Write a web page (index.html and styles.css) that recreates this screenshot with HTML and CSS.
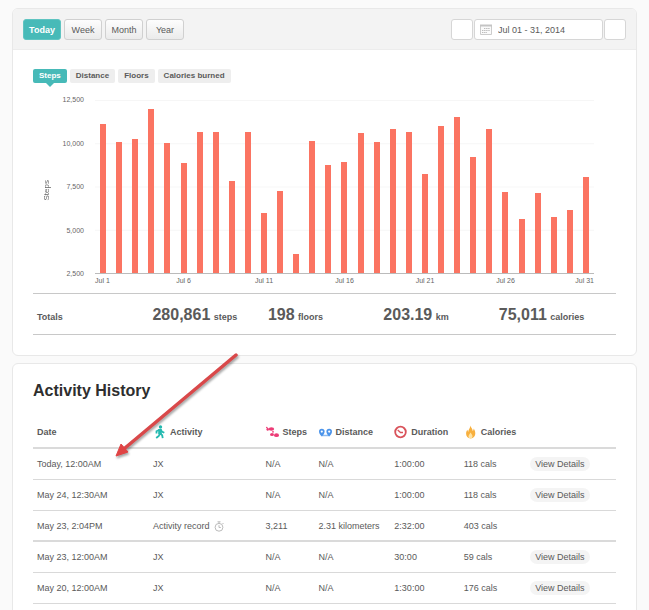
FILE: index.html
```
<!DOCTYPE html>
<html lang="en">

<head>
  <meta charset="UTF-8">
  <meta name="viewport" content="width=device-width, initial-scale=1.0">
  <title>Activity</title>
  <link rel="stylesheet" href="styles.css">
</head>

<body>
  <section class="panel">
    <header class="toolbar">
      <div class="ranges">
        <button type="button" class="range active">Today</button>
        <button type="button" class="range">Week</button>
        <button type="button" class="range">Month</button>
        <button type="button" class="range">Year</button>
      </div>
      <div class="dates">
        <button type="button" class="step" aria-label="Previous"></button>
        <label class="picker">
          <svg class="calendar" viewBox="0 0 12 11" aria-hidden="true">
            <path d="M.5 1.5h11v9H.5z" fill="#fafafa" stroke="#ccc" />
            <path d="M0 .5h12v2H0z" fill="#c4c4c4" />
            <path d="M4 4.5h6M2 6.5h8M2 8.5h5" stroke="#bbb" stroke-dasharray="1.4 .7" />
          </svg>
          <input type="text" value="Jul 01 - 31, 2014" aria-label="Date range">
        </label>
        <button type="button" class="step" aria-label="Next"></button>
      </div>
    </header>

    <div class="content">
      <div class="tabs">
        <button type="button" class="tab active">Steps</button>
        <button type="button" class="tab">Distance</button>
        <button type="button" class="tab">Floors</button>
        <button type="button" class="tab">Calories burned</button>
      </div>

      <div class="chart">
        <div class="axis-title">Steps</div>
        <div class="y-axis">
          <span>12,500</span>
          <span>10,000</span>
          <span>7,500</span>
          <span>5,000</span>
          <span>2,500</span>
        </div>
        <div class="plot">
          <div class="bars" id="bars"></div>
          <div class="x-axis" id="days"></div>
        </div>
      </div>

      <div class="totals">
        <div>Totals</div>
        <div><strong>280,861</strong> steps</div>
        <div><strong>198</strong> floors</div>
        <div><strong>203.19</strong> km</div>
        <div><strong>75,011</strong> calories</div>
      </div>
    </div>
  </section>

  <section class="panel history">
    <svg class="arrow" viewBox="0 0 136 116" aria-hidden="true">
      <g class="arrow-shape">
        <path d="M127 6 16 99" stroke="#d9484a" stroke-width="3.5" stroke-linecap="round" />
        <path d="M7 107l5-12 7 8z" fill="#e04344" stroke="#e04344" />
      </g>
    </svg>
    <h2>Activity History</h2>
    <table>
      <thead>
        <tr>
          <th class="date">Date</th>
          <th class="activity">
            <svg class="icon" viewBox="0 0 13 14" aria-hidden="true">
              <circle cx="7.5" cy="2" r="1.7" fill="#23b9b0" />
              <path d="M7 4.3v4.5M6.5 4.8 3.5 6.3v2.2M7.5 4.8l1.8 2 2 1M6.8 8.5 5.8 11l-2.6 2M7.2 8.5l2 1.8.5 2.9" fill="none" stroke="#23b9b0" stroke-width="1.8" />
              <path d="M5.2 4h3.6v5H5.200z" fill="#23b9b0" />
            </svg>Activity
          </th>
          <th class="steps">
            <svg class="icon" viewBox="0 0 13 14" aria-hidden="true">
              <g fill="#ec3c76">
                <ellipse cx="5.4" cy="4" rx="2.8" ry="1.8" />
                <ellipse cx="1.700" cy="4.200" rx="1.200" ry="1.500" />
                <ellipse cx="10.500" cy="10.200" rx="2.500" ry="1.900" />
                <ellipse cx="6" cy="9.500" rx="2" ry="1.600" />
                <circle cx=".8" cy="2.500" r=".8" />
                <circle cx="7" cy="6.800" r=".9" />
              </g>
            </svg>Steps
          </th>
          <th class="distance">
            <svg class="icon" viewBox="0 0 13 14" aria-hidden="true">
              <path d="M2.800 10.500h7.400" fill="none" stroke="#8dbbf0" stroke-width="1.500" />
              <path d="M2.800 11.500C1 9.800 0 8.500 0 6.600a2.800 2.800 0 0 1 5.600 0c0 1.900-1 3.200-2.800 4.900zM10.200 11.500C8.400 9.800 7.400 8.500 7.400 6.600a2.800 2.800 0 0 1 5.600 0c0 1.900-1 3.200-2.800 4.900z" fill="#4c94ea" />
              <circle cx="2.800" cy="6.600" r="1.100" fill="#fff" />
              <circle cx="10.200" cy="6.600" r="1.100" fill="#fff" />
            </svg>Distance
          </th>
          <th class="duration">
            <svg class="icon" viewBox="0 0 13 14" aria-hidden="true">
              <circle cx="6.500" cy="7" r="5.300" fill="#fff" stroke="#d9535b" stroke-width="1.800" />
              <path d="M3.700 5 6.500 7.500H9" fill="none" stroke="#d9535b" stroke-width="1.300" />
            </svg>Duration
          </th>
          <th class="calories">
            <svg class="icon" viewBox="0 0 13 14" aria-hidden="true">
              <path d="M6.200.5c.8 2 2.500 3.500 2.500 5.500.8-.5 1-1.500.9-2.400 1.300 1.700 1.700 3.200 1.700 4.900 0 2.500-1.500 4.700-4.600 5-3-.2-4.600-2-4.600-4.700 0-1.800.5-3 1.400-4 0 1 .3 1.800.9 2.200C4 4.700 6.400 3.500 6.200.5z" fill="#f8b03e" />
              <path d="M6.500 7.500c1.300 1.800 2 2.600 2 3.900 0 1.300-1 2-2 2s-2-.7-2-2c0-1.300 1.400-2.300 2-3.900z" fill="#ffe3a3" />
            </svg>Calories
          </th>
          <th class="details"></th>
        </tr>
      </thead>
      <tbody>
        <tr>
          <td>Today, 12:00AM</td>
          <td>JX</td>
          <td>N/A</td>
          <td>N/A</td>
          <td>1:00:00</td>
          <td>118 cals</td>
          <td><a href="#" class="view">View Details</a></td>
        </tr>
        <tr>
          <td>May 24, 12:30AM</td>
          <td>JX</td>
          <td>N/A</td>
          <td>N/A</td>
          <td>1:00:00</td>
          <td>118 cals</td>
          <td><a href="#" class="view">View Details</a></td>
        </tr>
        <tr class="day-end">
          <td>May 23, 2:04PM</td>
          <td>Activity record
            <svg class="stopwatch" viewBox="0 0 10 11" aria-hidden="true">
              <circle cx="5" cy="6.300" r="3.900" fill="none" stroke="#bbb" />
              <path d="M3.500.8h3M5 1v2M5 4.200v2.300h1.800M8.500 2l1 1" fill="none" stroke="#bbb" />
            </svg>
          </td>
          <td>3,211</td>
          <td>2.31 kilometers</td>
          <td>2:32:00</td>
          <td>403 cals</td>
          <td></td>
        </tr>
        <tr>
          <td>May 23, 12:00AM</td>
          <td>JX</td>
          <td>N/A</td>
          <td>N/A</td>
          <td>30:00</td>
          <td>59 cals</td>
          <td><a href="#" class="view">View Details</a></td>
        </tr>
        <tr>
          <td>May 20, 12:00AM</td>
          <td>JX</td>
          <td>N/A</td>
          <td>N/A</td>
          <td>1:30:00</td>
          <td>176 cals</td>
          <td><a href="#" class="view">View Details</a></td>
        </tr>
      </tbody>
    </table>
  </section>

  <script src="chart.js"></script>
</body>

</html>
```

FILE: styles.css
```
* {
  box-sizing: border-box;
  margin: 0;
  padding: 0;
}

body {
  padding: 8px 12px 0;
  background: #fafafa;
  color: #5a5a5a;
  font-family: "Liberation Sans", Arial, sans-serif;
  font-size: 9px;
  line-height: 12px;
}

button,
input {
  font: inherit;
  color: inherit;
}

.panel {
  position: relative;
  margin-bottom: 7px;
  border: 1px solid #e8e8e8;
  border-radius: 6px;
  background: #fff;
}

/* toolbar */
.toolbar {
  display: flex;
  justify-content: space-between;
  padding: 10px;
  height: 41px;
  border-bottom: 1px solid #ececec;
  border-radius: 5px 5px 0 0;
  background: #f3f3f3;
}

.ranges {
  display: flex;
  gap: 3px;
}

.range {
  width: 38px;
  height: 21px;
  border: 1px solid #d0d0d0;
  border-radius: 3px;
  background: linear-gradient(#fdfdfd, #ebebeb);
}

.range.active {
  border-color: #5fc4c1;
  background: #47bab8;
  color: #fff;
  font-weight: bold;
}

.dates {
  display: flex;
  gap: 1px;
}

.step,
.picker {
  height: 21px;
  border: 1px solid #d6d6d6;
  border-radius: 3px;
  background: #fff;
}

.step {
  width: 22px;
}

.picker {
  display: flex;
  align-items: center;
  gap: 6px;
  width: 129px;
  padding: 0 5px;
}

.picker input {
  flex: 1;
  min-width: 0;
  border: none;
  background: transparent;
}

.calendar {
  width: 12px;
  height: 11px;
}

.content {
  padding: 19px 20px 20px;
}

/* chart */
.tabs {
  display: flex;
  gap: 3px;
}

.tab {
  position: relative;
  height: 14px;
  padding: 0 6px;
  border: none;
  border-radius: 2px;
  background: #eee;
  font-size: 8px;
  font-weight: bold;
}

.tab.active {
  background: #47bab8;
  color: #fff;
}

.tab.active::after {
  content: "";
  position: absolute;
  top: 100%;
  left: 50%;
  margin-left: -4px;
  border: 4px solid transparent;
  border-top-color: #47bab8;
  border-bottom: none;
}

.chart {
  display: flex;
  margin-top: 13px;
  padding: 0 22px 8px 10px;
  color: #666;
  font-size: 7px;
  line-height: 8px;
}

.axis-title {
  align-self: center;
  font-size: 8px;
  writing-mode: vertical-rl;
  transform: rotate(180deg);
}

.y-axis {
  display: flex;
  flex-direction: column;
  justify-content: space-between;
  width: 33px;
  height: 182px;
  text-align: right;
}

.plot {
  flex: 1;
  padding-top: 4px;
  margin-left: 11px;
}

.bars,
.x-axis {
  display: grid;
  grid-template-columns: repeat(31, 1fr);
}

.bars {
  align-items: end;
  justify-items: center;
  height: 174px;
  border-bottom: 1px solid #bbb;
  background: linear-gradient(#f6f6f6 1px, transparent 1px) 0 0 / 100% 25%;
}

.bar {
  width: 6px;
  background: #fb7462;
}

.x-axis {
  margin-top: 3px;
}

.x-axis span {
  display: flex;
  justify-content: center;
  min-width: 0;
  height: 8px;
  white-space: nowrap;
}

.x-axis span:first-child {
  justify-content: flex-start;
}

.x-axis span:last-child {
  justify-content: flex-end;
}

.totals {
  display: grid;
  grid-template-columns: 20fr 20fr 20fr 20fr 21fr;
  align-items: baseline;
  height: 42px;
  padding-top: 11px;
  border-top: 1px solid #c8c8c8;
  border-bottom: 1px solid #c8c8c8;
  font-weight: bold;
}

.totals div {
  padding-left: 4px;
}

.totals strong {
  margin-right: 1px;
  font-size: 16px;
  line-height: 20px;
}

/* history */
.history {
  padding: 17px 20px 20px;
}

.history h2 {
  color: #2e2e2e;
  font-size: 16px;
  line-height: 20px;
}

.arrow {
  position: absolute;
  top: -15px;
  left: 96px;
  width: 136px;
  height: 116px;
}

.arrow-shape {
  filter: drop-shadow(1px 2px 1px rgba(0, 0, 0, .35));
}

table {
  width: 100%;
  margin-top: 15px;
  border-spacing: 0;
  table-layout: fixed;
}

th,
td {
  height: 31px;
  padding: 0 4px;
  border-bottom: 1px solid #d9d9d9;
  text-align: left;
  white-space: nowrap;
}

th {
  height: 33px;
  border-bottom: 2px solid #dadada;
}

.day-end td {
  border-bottom: 2px solid #dadada;
}

.date {
  width: 19.9%;
}

.activity {
  width: 19.3%;
}

.steps {
  width: 9.1%;
}

.distance {
  width: 13%;
}

.duration {
  width: 11.9%;
}

.calories {
  width: 11.4%;
}

.icon {
  width: 13px;
  height: 14px;
  margin-right: 4px;
  vertical-align: -4px;
}

.stopwatch {
  width: 10px;
  height: 11px;
  margin-left: 2px;
  vertical-align: -3px;
}

.view {
  display: inline-block;
  padding: 1px 5px;
  border-radius: 7px;
  background: #f4f4f4;
  color: inherit;
  text-decoration: none;
}
```

FILE: chart.js
```
const steps = [
  11117, 10097, 10223, 11981, 10022, 8840, 10638, 10638, 7831, 10638,
  5987, 7215, 3624, 10137, 8754, 8927, 10598, 10097, 10800, 10638,
  8235, 11019, 11491, 9186, 10800, 7180, 5641, 7099, 5716, 6143, 8033
]
const min = 2500
const max = 12500

const bars = document.getElementById('bars')
const days = document.getElementById('days')

steps.forEach((value, i) => {
  const bar = document.createElement('div')
  bar.className = 'bar'
  bar.style.height = `${(value - min) / (max - min) * 100}%`
  bars.appendChild(bar)

  // label every fifth day
  const day = document.createElement('span')
  if (i % 5 === 0) day.innerText = `Jul ${i + 1}`
  days.appendChild(day)
})
```
